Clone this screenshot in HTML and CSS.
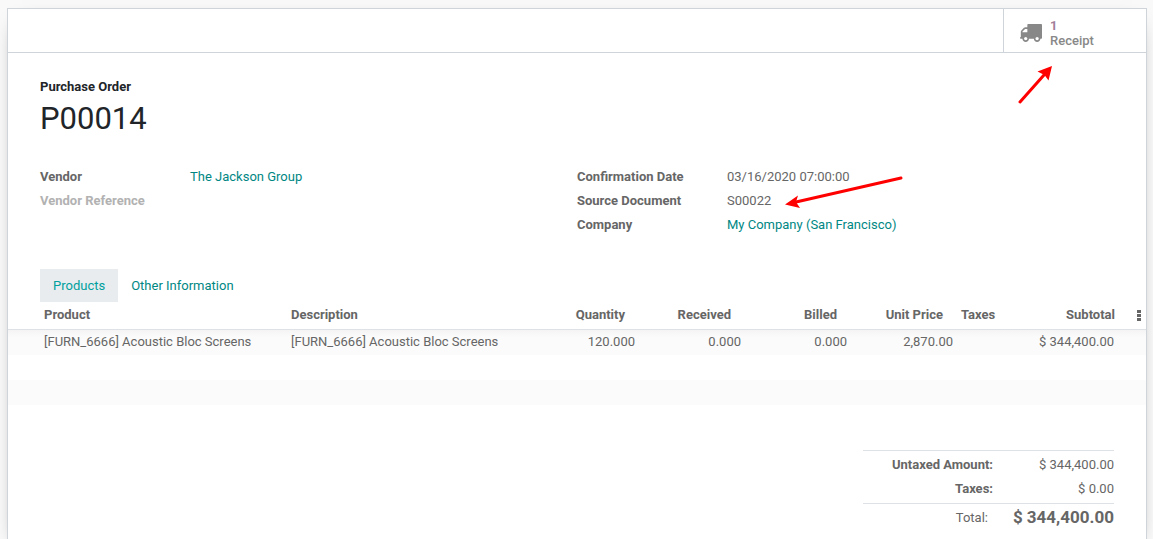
FILE: index.html
```html
<!DOCTYPE html>
<html lang="en">
<head>
<meta charset="utf-8">
<title>Purchase Order P00014</title>
<link rel="stylesheet" href="styles.css">
</head>
<body>
<main class="sheet">
  <div class="button-box">
    <button type="button" class="stat-button">
      <svg class="truck" viewBox="64 256 1728 1408" aria-hidden="true">
        <path fill="#888" d="M640 1408q0-52-38-90t-90-38-90 38-38 90 38 90 90 38 90-38 38-90zm-384-512h384v-256h-158q-13 0-22 9l-195 195q-9 9-9 22v30zm1280 512q0-52-38-90t-90-38-90 38-38 90 38 90 90 38 90-38 38-90zm256-1088v1024q0 15-4 26.500t-13.500 18.500-16.500 11.500-23.500 6-22.500 2-25.500 0-22.500-.5q0 106-75 181t-181 75-181-75-75-181h-384q0 106-75 181t-181 75-181-75-75-181h-64q-3 0-22.500.5t-25.500 0-22.500-2-23.500-6-16.500-11.500-13.500-18.500-4-26.500q0-26 19-45t45-19v-320q0-8-.5-35t0-38 2.500-34.500 6.500-37 14-30.500 22.500-30l198-198q19-19 50.500-32t58.500-13h160v-192q0-26 19-45t45-19h1024q26 0 45 19t19 45z"/>
      </svg>
      <span class="stat-text"><span class="stat-value">1</span><span>Receipt</span></span>
    </button>
  </div>

  <header class="title">
    <span class="title-label">Purchase Order</span>
    <h1>P00014</h1>
  </header>

  <section class="groups">
    <dl class="group">
      <dt>Vendor</dt><dd><a href="#">The Jackson Group</a></dd>
      <dt class="empty">Vendor Reference</dt><dd></dd>
    </dl>
    <dl class="group">
      <dt>Confirmation Date</dt><dd>03/16/2020 07:00:00</dd>
      <dt>Source Document</dt><dd>S00022</dd>
      <dt>Company</dt><dd><a href="#">My Company (San Francisco)</a></dd>
    </dl>
  </section>

  <nav class="tabs">
    <a href="#" class="tab active">Products</a>
    <a href="#" class="tab">Other Information</a>
  </nav>

  <table class="lines">
    <colgroup>
      <col class="col-product"><col><col class="col-number"><col class="col-number"><col class="col-number"><col class="col-number"><col class="col-taxes"><col class="col-number"><col class="col-menu">
    </colgroup>
    <thead>
      <tr>
        <th>Product</th><th>Description</th><th class="num">Quantity</th><th class="num">Received</th><th class="num">Billed</th><th class="num">Unit Price</th><th>Taxes</th><th class="num last">Subtotal</th>
        <th class="menu"><button type="button" class="menu-button" aria-label="Optional columns"><svg viewBox="0 0 4 11" aria-hidden="true"><path fill="#666" d="M0 0h4v3H0zM0 4h4v3H0zM0 8h4v3H0z"/></svg></button></th>
      </tr>
    </thead>
    <tbody>
      <tr><td>[FURN_6666] Acoustic Bloc Screens</td><td>[FURN_6666] Acoustic Bloc Screens</td><td class="num">120.000</td><td class="num">0.000</td><td class="num">0.000</td><td class="num">2,870.00</td><td></td><td class="num">$ 344,400.00</td><td></td></tr>
      <tr><td colspan="9"></td></tr>
      <tr><td colspan="9"></td></tr>
    </tbody>
  </table>

  <table class="totals">
    <tbody>
      <tr><th>Untaxed Amount:</th><td>$ 344,400.00</td></tr>
      <tr><th>Taxes:</th><td>$ 0.00</td></tr>
      <tr class="total"><th>Total:</th><td>$ 344,400.00</td></tr>
    </tbody>
  </table>

  <svg class="arrow arrow-receipt" viewBox="0 0 36 40" aria-hidden="true"><path d="M2 37 26 10" stroke="red" stroke-width="3" stroke-linecap="round"/><path fill="red" d="M34 1 30.500 15.500 26.500 10 19.500 6.500z"/></svg>
  <svg class="arrow arrow-source" viewBox="0 0 120 34" aria-hidden="true"><path d="M117 3 12 27" stroke="red" stroke-width="3" stroke-linecap="round"/><path fill="red" d="M1 29.500 14 20.500 12 27 16 33z"/></svg>
</main>
</body>
</html>
```
FILE: styles.css
```css
* {
  box-sizing: border-box;
}

body {
  margin: 0;
  padding: 8px 6px 0 7px;
  background: #f9f9f9;
  color: #666;
  font: 13px/20px Roboto, sans-serif;
  overflow: hidden;
}

.sheet {
  position: relative;
  min-height: 100vh;
  background: #fff;
  border: 1px solid #ced4da;
  box-shadow: 0 5px 20px -15px #000;
}

a {
  color: #008784;
  text-decoration: none;
}

button {
  border: 0;
  background: none;
  padding: 0;
  font: inherit;
  color: inherit;
}

.button-box {
  display: flex;
  justify-content: flex-end;
  height: 44px;
  border-bottom: 1px solid #ced4da;
}

.stat-button {
  display: flex;
  align-items: center;
  gap: 8px;
  width: 143px;
  padding: 4px 16px 0;
  border-left: 1px solid #ced4da;
  color: #888;
  font-weight: 500;
  line-height: 15px;
  text-align: left;
}

.truck {
  width: 22px;
  height: 18px;
}

.stat-text {
  display: flex;
  flex-direction: column;
}

.stat-value {
  color: #a0809a;
  font-weight: 700;
}

.title {
  padding: 24px 32px 0;
  color: #212529;
}

.title-label {
  display: block;
  font-weight: 700;
}

.title h1 {
  margin: 4px 0 0;
  font-size: 31px;
  font-weight: 400;
  line-height: 36px;
}

.groups {
  display: grid;
  grid-template-columns: 1fr 1fr;
  padding: 30px 32px 0;
}

.group {
  display: grid;
  grid-template-columns: 150px 1fr;
  grid-auto-rows: 20px;
  align-content: start;
  gap: 4px 0;
  margin: 0;
}

.group dt {
  font-weight: 700;
}

.group .empty {
  color: #b2b2b2;
}

.group dd {
  margin: 0;
}

.tabs {
  display: flex;
  padding: 34px 32px 0;
}

.tab {
  padding: 7px 13px 6px;
}

.tab.active {
  background: #e9ecef;
  color: #00a09d;
}

.lines {
  width: 100%;
  table-layout: fixed;
  border-collapse: collapse;
}

.col-product {
  width: 279px;
}

.col-number {
  width: 106px;
}

.col-taxes {
  width: 55px;
}

.col-menu {
  width: 28px;
}

.lines th,
.lines td {
  padding: 0 4px;
  text-align: left;
  white-space: nowrap;
}

.lines th {
  height: 27px;
  font-weight: 700;
  border-bottom: 1px solid #dee2e6;
}

.lines td {
  height: 25px;
}

.lines tbody tr:first-child td {
  height: 26px;
}

.lines th:first-child,
.lines td:first-child {
  padding-left: 36px;
}

.lines .num {
  text-align: right;
}

.lines th.num {
  padding-right: 14px;
}

.lines th.last {
  padding-right: 3px;
}

.lines th.menu {
  padding: 0 5px 0 0;
  text-align: right;
}

.menu-button {
  display: block;
  margin-left: auto;
}

.menu-button svg {
  display: block;
  width: 4px;
  height: 11px;
}

.lines tbody tr:nth-child(odd) {
  background: #fbfbfb;
}

.lines tbody tr:first-child {
  background: linear-gradient(#f3f3f3, #fbfbfb 8px);
}

.totals {
  width: 251px;
  margin: 45px 32px 0 auto;
  border-collapse: collapse;
  border-top: 1px solid #dee2e6;
}

.totals th,
.totals td {
  height: 24px;
  padding: 4px 0 0;
  text-align: right;
}

.totals th {
  width: 130px;
  font-weight: 700;
}

.totals .total {
  border-top: 1px solid #dee2e6;
}

.totals tr:nth-child(2) > * {
  height: 28px;
  padding-bottom: 4px;
}

.totals .total th {
  padding-right: 5px;
  font-weight: 400;
}

.totals .total td {
  padding-top: 2px;
  font-size: 17px;
  font-weight: 700;
}

.arrow {
  position: absolute;
  fill: none;
}

.arrow-receipt {
  top: 56px;
  right: 92px;
  width: 36px;
  height: 40px;
}

.arrow-source {
  top: 166px;
  left: 776px;
  width: 120px;
  height: 34px;
}
```
